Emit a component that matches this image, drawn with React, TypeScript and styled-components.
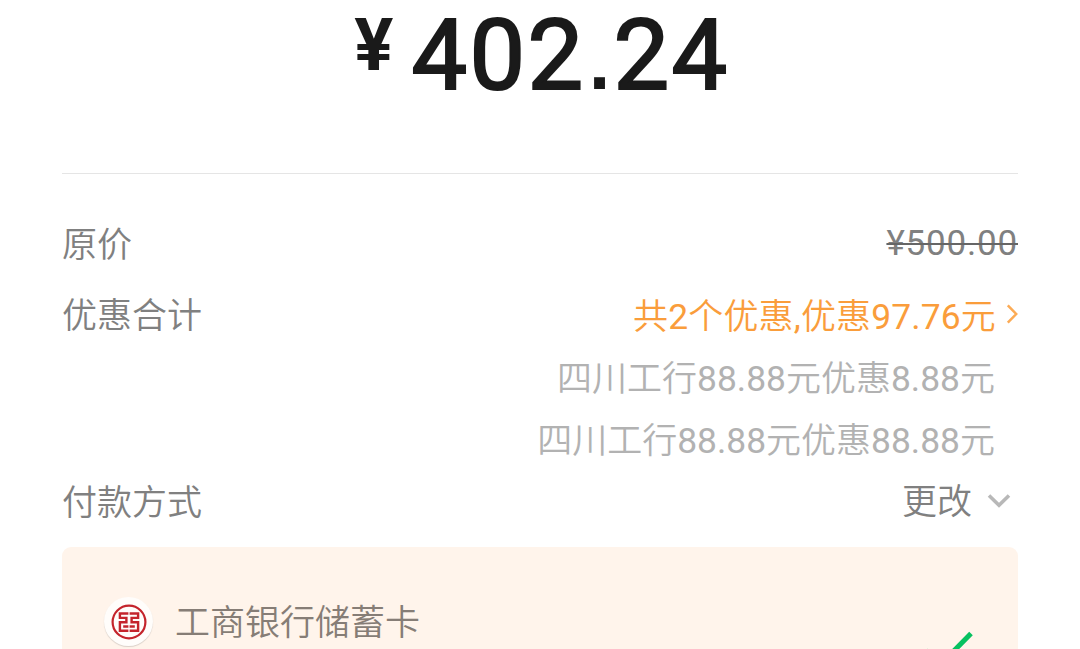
import React from 'react'
import styled, { createGlobalStyle } from 'styled-components'

const discounts = ['四川工行88.88元优惠8.88元', '四川工行88.88元优惠88.88元']

export default function App () {
  return (
    <>
      <GlobalStyle />
      <Page>
        <Amount>
          <Currency>¥</Currency>
          <Total>
            402<Point>.</Point>24
          </Total>
        </Amount>
        <Row $height={74}>
          <Label>原价</Label>
          <OriginalPrice>¥500.00</OriginalPrice>
        </Row>
        <Row $height={68}>
          <Label>优惠合计</Label>
          <DiscountTotal>
            <MixedText text='共2个优惠,优惠97.76元' />
            <ChevronRight />
          </DiscountTotal>
        </Row>
        <DiscountList>
          {discounts.map(text => (
            <DiscountItem key={text}>
              <MixedText text={text} />
            </DiscountItem>
          ))}
        </DiscountList>
        <Row $height={58}>
          <Label>付款方式</Label>
          <ChangeButton>
            <span>更改</span>
            <ChevronDown />
          </ChangeButton>
        </Row>
        <Card>
          <BankIcon>
            <BankLogo />
          </BankIcon>
          <BankName>工商银行储蓄卡</BankName>
          <Check />
        </Card>
      </Page>
    </>
  )
}

// Numbers are set a little larger and heavier than the Chinese text around them
function MixedText ({ text }: { text: string }) {
  return (
    <span>
      {text
        .split(/([\d.,]+)/)
        .map((part, i) => (i % 2 ? <Digits key={i}>{part}</Digits> : part))}
    </span>
  )
}

function ChevronRight () {
  return (
    <svg width='12' height='20' viewBox='0 0 12 20' fill='none'>
      <path d='M1.8 1.4 L10.2 10 L1.8 18.6' stroke='#fcab55' strokeWidth='2.5' />
    </svg>
  )
}

function ChevronDown () {
  return (
    <svg width='24' height='16' viewBox='0 0 24 16' fill='none'>
      <path d='M2 2.5 L12 12.2 L22 2.5' stroke='#b8b8b8' strokeWidth='3.6' />
    </svg>
  )
}

function BankLogo () {
  return (
    <svg width='36' height='36' viewBox='0 0 36 36' fill='none' stroke='#c4242c'>
      <circle cx='18' cy='18' r='16.4' strokeWidth='2.2' />
      <g strokeWidth='2.4'>
        <path d='M17.4 9.5 H8.9 V13.9 H15.4 V18.2 H8.9 V26.8 H17.4 M12.2 22.5 H17.4' />
        <path d='M18.6 9.5 H27.1 V13.9 H20.6 V18.2 H27.1 V26.8 H18.6 M23.8 22.5 H18.6' />
      </g>
    </svg>
  )
}

function Check () {
  return (
    <CheckSvg width='50' height='38' viewBox='0 0 50 38' fill='none'>
      <path d='M2.6 19.4 L17 34 L48 2.5' stroke='#07c160' strokeWidth='5' />
    </CheckSvg>
  )
}

const GlobalStyle = createGlobalStyle`
  body {
    margin: 0;
    overflow: hidden;
    background: #fff;
    font-family: Roboto, 'Noto Sans CJK SC', sans-serif;
    font-weight: 350;
  }

  svg {
    display: block;
    flex-shrink: 0;
  }
`

const Page = styled.main`
  box-sizing: border-box;
  width: 1080px;
  height: 649px;
  padding: 0 62px;
  overflow: hidden;
  color: #808080;
  font-size: 35px;
`

const Amount = styled.div`
  box-sizing: border-box;
  display: flex;
  justify-content: center;
  height: 174px;
  margin-bottom: 32px;
  padding-left: 4px;
  border-bottom: 1px solid #e5e5e5;
  color: #1a1a1a;
`

const Currency = styled.span`
  margin: 3px 18px 0 0;
  font-size: 73px;
  font-weight: 700;
  line-height: 84px;
`

const Total = styled.span`
  font-size: 99px;
  font-weight: 400;
  line-height: 110px;
  letter-spacing: 2.4px;
  -webkit-text-stroke: 2.2px #1a1a1a;
`

const Point = styled.span`
  display: inline-block;
  width: 28px;
  font: 700 62px/1 'DejaVu Sans', sans-serif;
  letter-spacing: 0;
  text-align: center;
  -webkit-text-stroke: 0;
`

const Row = styled.div<{ $height: number }>`
  display: flex;
  align-items: center;
  justify-content: space-between;
  height: ${props => props.$height}px;
`

const Label = styled.span`
  padding-top: 5px;
  line-height: 52px;
`

const Digits = styled.span`
  font-size: 35.4px;
  font-weight: 400;
`

const OriginalPrice = styled.span`
  font-size: 35px;
  font-weight: 400;
  letter-spacing: 0.8px;
  text-decoration: line-through;
  text-decoration-color: #666;
  text-decoration-thickness: 2px;
`

const DiscountTotal = styled.div`
  display: flex;
  align-items: center;
  gap: 10px;
  color: #fa9d3b;
  line-height: 48px;

  > span {
    padding-top: 6px;
    letter-spacing: 0.15px;
  }
`

const DiscountList = styled.div`
  padding-right: 23px;
`

const DiscountItem = styled.div`
  height: 62px;
  color: #b2b2b2;
  line-height: 62px;
  text-align: right;
`

const ChangeButton = styled.div`
  display: flex;
  align-items: center;
  gap: 15px;
  padding-right: 7px;
  line-height: 50px;

  > span {
    padding-top: 3px;
  }
`

const Card = styled.section`
  display: flex;
  align-items: flex-start;
  height: 180px;
  margin-top: 17px;
  padding: 50px 45px 0 42px;
  border-radius: 9px;
  background: #fff4eb;
  box-sizing: border-box;
`

const BankIcon = styled.div`
  display: flex;
  align-items: center;
  justify-content: center;
  width: 49px;
  height: 49px;
  border-radius: 50%;
  background: #fffdfb;
  box-shadow: 0 1px 1px rgba(0, 0, 0, 0.15);
`

const BankName = styled.span`
  margin-left: 22px;
  padding-top: 2px;
  color: #867d76;
  line-height: 50px;
`

const CheckSvg = styled.svg`
  margin: 34px 0 0 auto;
`
